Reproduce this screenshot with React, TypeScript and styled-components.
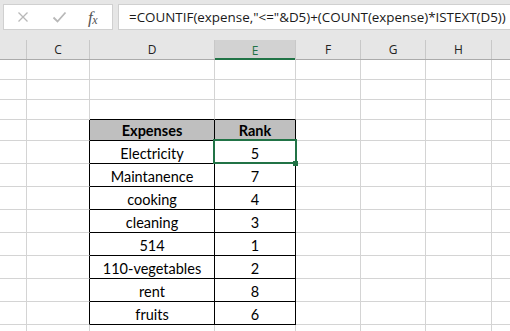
import React from "react";
import styled, { createGlobalStyle } from "styled-components";

const GlobalStyle = createGlobalStyle`
  html, body { margin: 0; padding: 0; background: #ffffff; overflow: hidden; }
  #root { width: 510px; height: 331px; overflow: hidden; }
`;

const COLS = [
  { key: "B", w: 27 },
  { key: "C", w: 63 },
  { key: "D", w: 125 },
  { key: "E", w: 81 },
  { key: "F", w: 65 },
  { key: "G", w: 65 },
  { key: "H", w: 66 },
  { key: "I", w: 40 },
];

type RowDef = { h: number; d?: string; e?: string; head?: boolean; table?: boolean; topEdge?: boolean; selE?: boolean };

const data: [string, string][] = [
  ["Electricity", "5"],
  ["Maintanence", "7"],
  ["cooking", "4"],
  ["cleaning", "3"],
  ["514", "1"],
  ["110-vegetables", "2"],
  ["rent", "8"],
  ["fruits", "6"],
];

const ROWS: RowDef[] = [
  { h: 20 },
  { h: 20 },
  { h: 20, topEdge: true },
  { h: 21, d: "Expenses", e: "Rank", head: true, table: true },
  ...data.map(([d, e], i) => ({ h: 23, d, e, table: true, selE: i === 0 })),
  { h: 23 },
];

const Sheet = styled.div`
  width: 510px;
  height: 331px;
  overflow: hidden;
  background: #ffffff;
  display: flex;
  flex-direction: column;
`;

const FormulaBar = styled.div`
  height: 40px;
  flex: none;
  background: #e6e6e6;
  display: flex;
  align-items: flex-start;
  gap: 5px;
  padding: 4px 0 0 3px;
  box-sizing: border-box;
`;

const ButtonsBox = styled.div`
  width: 110px;
  height: 26px;
  box-sizing: border-box;
  background: #ffffff;
  border: 1px solid #d0d0d0;
  position: relative;
  display: flex;
  align-items: center;
`;

const IconSlot = styled.div<{ $x: number }>`
  position: absolute;
  left: ${(p) => p.$x}px;
  top: 0;
  height: 24px;
  display: flex;
  align-items: center;
`;

const Fx = styled.span`
  font-family: "Liberation Serif", "DejaVu Serif", serif;
  font-style: italic;
  font-size: 17px;
  color: #555555;
  letter-spacing: -0.5px;
  line-height: 1;
  & > small {
    font-size: 12px;
    position: relative;
    top: 1px;
  }
`;

const FormulaInput = styled.div`
  flex: 1;
  height: 26px;
  margin-right: -6px;
  box-sizing: border-box;
  background: #ffffff;
  border: 1px solid #d0d0d0;
  padding-left: 10px;
  display: flex;
  align-items: center;
  font-family: "Open Sans", "Noto Sans", sans-serif;
  font-size: 13.4px;
  color: #1a1a1a;
  white-space: nowrap;
  overflow: hidden;
`;

const HeaderRow = styled.div`
  display: flex;
  height: 20px;
  flex: none;
  background: #e6e6e6;
  box-sizing: border-box;
  border-bottom: 1px solid #ababab;
`;

const ColHeader = styled.div<{ $w: number; $active?: boolean }>`
  width: ${(p) => p.$w}px;
  flex: none;
  box-sizing: border-box;
  border-right: 1px solid #c8c8c8;
  display: flex;
  align-items: center;
  justify-content: center;
  font-family: "Open Sans", "Noto Sans", sans-serif;
  font-size: 12px;
  color: ${(p) => (p.$active ? "#217346" : "#222222")};
  background: ${(p) => (p.$active ? "#d2d2d2" : "transparent")};
  box-shadow: ${(p) => (p.$active ? "inset 0 -2px 0 #217346" : "none")};
  margin-bottom: ${(p) => (p.$active ? "-1px" : "0")};
`;

const Row = styled.div<{ $h: number }>`
  display: flex;
  height: ${(p) => p.$h}px;
  flex: none;
`;

const Cell = styled.div<{ $w: number; $right: string; $bottom: string; $head?: boolean }>`
  width: ${(p) => p.$w}px;
  flex: none;
  position: relative;
  box-sizing: border-box;
  border-right: 1px solid ${(p) => p.$right};
  border-bottom: 1px solid ${(p) => p.$bottom};
  background: ${(p) => (p.$head ? "#bfbfbf" : "#ffffff")};
  display: flex;
  align-items: flex-end;
  justify-content: center;
  padding-bottom: 1px;
  font-family: Lato, "Open Sans", sans-serif;
  font-size: 14.5px;
  font-weight: ${(p) => (p.$head ? 700 : 400)};
  color: #000000;
  white-space: nowrap;
`;

const Selection = styled.div`
  position: absolute;
  left: -2px;
  top: -2px;
  width: 84px;
  height: 25px;
  box-sizing: border-box;
  border: 2px solid #217346;
  z-index: 2;
  pointer-events: none;
`;

const FillHandle = styled.div`
  position: absolute;
  left: 78px;
  top: 20px;
  width: 5px;
  height: 5px;
  background: #217346;
  z-index: 3;
`;

const GRID = "#d4d4d4";
const BLACK = "#000000";

function cellBorders(row: RowDef, colKey: string) {
  let right = GRID;
  let bottom = GRID;
  if (row.table) {
    if (colKey === "C" || colKey === "D" || colKey === "E") right = BLACK;
    if (colKey === "D" || colKey === "E") bottom = BLACK;
  }
  if (row.topEdge && (colKey === "D" || colKey === "E")) bottom = BLACK;
  return { right, bottom };
}

export default function App() {
  return (
    <>
      <GlobalStyle />
      <Sheet>
        <FormulaBar>
          <ButtonsBox>
            <IconSlot $x={13}>
              <svg width="12" height="12" viewBox="0 0 12 12">
                <path d="M1.5 1.5 L10.5 10.5 M10.5 1.5 L1.5 10.5" stroke="#b8b8b8" strokeWidth="1.3" fill="none" />
              </svg>
            </IconSlot>
            <IconSlot $x={48}>
              <svg width="15" height="12" viewBox="0 0 15 12">
                <path d="M1.5 6.5 L5.5 10.5 L13.5 1.5" stroke="#b8b8b8" strokeWidth="1.8" fill="none" />
              </svg>
            </IconSlot>
            <IconSlot $x={84}>
              <Fx>
                f<small>x</small>
              </Fx>
            </IconSlot>
          </ButtonsBox>
          <FormulaInput>=COUNTIF(expense,"&lt;="&amp;D5)+(COUNT(expense)*ISTEXT(D5))</FormulaInput>
        </FormulaBar>
        <HeaderRow>
          {COLS.map((c) => (
            <ColHeader key={c.key} $w={c.w} $active={c.key === "E"}>
              {c.key === "B" || c.key === "I" ? "" : c.key}
            </ColHeader>
          ))}
        </HeaderRow>
        {ROWS.map((r, ri) => (
          <Row key={ri} $h={r.h}>
            {COLS.map((c) => {
              const { right, bottom } = cellBorders(r, c.key);
              const text = c.key === "D" ? r.d : c.key === "E" ? r.e : undefined;
              return (
                <Cell key={c.key} $w={c.w} $right={right} $bottom={bottom} $head={r.head && (c.key === "D" || c.key === "E")}>
                  {text}
                  {r.selE && c.key === "E" && (
                    <>
                      <Selection />
                      <FillHandle />
                    </>
                  )}
                </Cell>
              );
            })}
          </Row>
        ))}
      </Sheet>
    </>
  );
}
